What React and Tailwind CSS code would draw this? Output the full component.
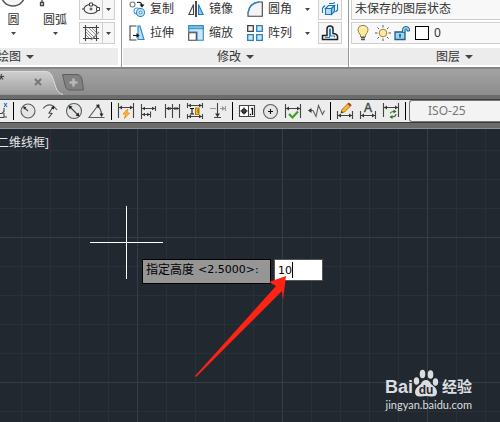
import React from 'react';

const stroke = { fill: 'none', stroke: '#434343', strokeWidth: 1.1 };

function Arrow({ small }) {
  return small ? (
    <svg width="5" height="3" viewBox="0 0 5 3" className="shrink-0">
      <path d="M0 0h5L2.5 3z" fill="#444" />
    </svg>
  ) : (
    <svg width="8" height="4" viewBox="0 0 8 4" className="shrink-0">
      <path d="M0 0h8L4 4z" fill="#444" />
    </svg>
  );
}

// Ribbon icons, 16x16
function CopyIcon() {
  return (
    <svg width="16" height="16" viewBox="0 0 16 16" {...stroke}>
      <circle cx="3.5" cy="3.5" r="2.5" stroke="#777" />
      <circle cx="8" cy="10" r="3" stroke="#4b9fd8" />
      <circle cx="11.5" cy="11.5" r="4" fill="#cfe8f7" stroke="#2b87c8" />
      <circle cx="11.5" cy="11.5" r="1.5" fill="#fff" stroke="#2b87c8" strokeWidth="1" />
      <path d="M8 1.5q4-1 5 2.5" stroke="#111" />
      <path d="M10.5 3.5h5l-2.5 3z" fill="#111" stroke="none" />
    </svg>
  );
}

function MirrorIcon() {
  return (
    <svg width="16" height="16" viewBox="0 0 16 16" {...stroke}>
      <path d="M5.5 3.5v10H.8z" />
      <path d="M10.5 3.5v10h4.7z" fill="#8ccbf0" stroke="#1f7fc4" />
      <path d="M8 0v16" stroke="#111" strokeWidth="1.5" />
    </svg>
  );
}

function StretchIcon() {
  return (
    <svg width="16" height="16" viewBox="0 0 16 16" {...stroke}>
      <path d="M9 1h2l4 13.5H9z" fill="#b5dcf4" stroke="#2b87c8" />
      <path d="M7.5 1H1v14h6.5" />
      <path d="M4 10.5h6" stroke="#111" />
      <path d="M7.5 8l3 2.5-3 2.5z" fill="#111" stroke="none" />
    </svg>
  );
}

function ScaleIcon() {
  return (
    <svg width="16" height="16" viewBox="0 0 16 16" {...stroke}>
      <path d="M.7.7h14.6v14.6H9V7H.7z" fill="#cce6f6" stroke="#2b87c8" />
      <path d="M.7.7h14.6v3H.7z" fill="#7fc1ea" stroke="#2b87c8" strokeWidth="1" />
      <path d="M.7 7.7h7.6v7.6H.7z" fill="#fff" />
    </svg>
  );
}

function FilletIcon() {
  return (
    <svg width="16" height="16" viewBox="0 0 16 16" {...stroke}>
      <path d="M1 15.300V12Q2.500 2 12 1h3.300v14.300z" fill="#f3f3f3" />
      <path d="M1 12Q2.500 2 12 1" stroke="#2b87c8" strokeWidth="1.5" />
    </svg>
  );
}

function ArrayIcon() {
  return (
    <svg width="16" height="16" viewBox="0 0 16 16" {...stroke} strokeWidth="1.3">
      <path d="M.7.7h5.6v5.6H.7z" fill="#f3f3f3" />
      <g fill="#cfe8f7" stroke="#2580c4">
        <path d="M9.7.7h5.6v5.6H9.7z" />
        <path d="M.7 9.7h5.6v5.6H.7z" />
        <path d="M9.7 9.7h5.6v5.6H9.7z" />
      </g>
    </svg>
  );
}

function ExplodeIcon() {
  return (
    <svg width="18" height="16" viewBox="0 0 18 16" {...stroke} stroke="#1a75b8">
      <path d="M4.5 7.5h6v6h-6z" fill="#b9def4" />
      <path d="M4.5 7.5l3-3h6l-3 3z" fill="#e4f3fb" />
      <path d="M10.5 7.5l3-3v6l-3 3z" fill="#8fcbee" />
      <path d="M1.5 7v5M1.5 7L4 4.5M8 2.5h4l2-1M16.5 3v6l-2 2" />
    </svg>
  );
}

function OffsetIcon() {
  return (
    <svg width="18" height="16" viewBox="0 0 18 16" {...stroke}>
      <path d="M1.5 14.5V10.5H6V4q0-3 3-3t3 3v4.5q3.5 0 4.5 2.5v3.5z" stroke="#222" strokeWidth="1.5" />
      <path d="M4 12.5h4.5V4.5q.5-1.5 1 0V11h4v1.5" stroke="#2b87c8" />
    </svg>
  );
}

function EllipseIcon() {
  return (
    <svg width="18" height="16" viewBox="0 0 18 16" {...stroke}>
      <ellipse cx="9" cy="8" rx="7" ry="4.5" />
      <path d="M9 6.5v3M7.5 8h3" />
      <path d="M7.5 2h3v3h-3zM14.5 6.5h3v3h-3z" fill="#fff" strokeWidth="1" />
      <path d="M0 8h2.5" />
    </svg>
  );
}

function HatchIcon() {
  return (
    <svg width="18" height="16" viewBox="0 0 18 16" {...stroke}>
      <path d="M3.5 0v16M14.5 0v16M1 2.5h16M1 13.5h16" />
      <path d="M4 4l9 9M4 7l6 6M4 10l3 3M7 3l7 7M10 3l4 4" stroke="#777" strokeWidth=".8" />
      <path d="M9 15l8-8" stroke="#888" />
    </svg>
  );
}

// Icons of the dimension toolbar, each drawn in a 23x22 cell
const dims = [
  [
    {
      name: '半径',
      art: (
        <>
          <circle cx="11" cy="11" r="7" fill="#e3e6e7" stroke="#5d5d5d" />
          <path d="M11 11L7 7.5" />
          <path d="M6 6.5l3.5.5-2.5 2.5z" fill="#222" stroke="none" />
        </>
      ),
    },
    {
      name: '折弯',
      art: (
        <>
          <path d="M3 8.5Q10 .5 17 10" stroke="#5d5d5d" />
          <path d="M8.5 18l3.5-4.5-3-.5 4-6" />
          <path d="M14 5.5v4l-3-1.5z" fill="#222" stroke="none" />
        </>
      ),
    },
    {
      name: '直径',
      art: (
        <>
          <circle cx="11" cy="11" r="7.5" fill="#e3e6e7" stroke="#5d5d5d" />
          <path d="M7 7l8 8" />
          <path d="M5.5 5.5l4 1-3 3zM16.5 16.5l-4-1 3-3z" fill="#222" stroke="none" />
        </>
      ),
    },
    {
      name: '角度',
      art: (
        <>
          <path d="M18.5 17.5H3L13 4" stroke="#5d5d5d" />
          <path d="M11.5 6q4 3 4 9" />
          <path d="M10 4.5l4 1-2 3zM15.5 17l-2-3.5h4z" fill="#222" stroke="none" />
        </>
      ),
    },
  ],
  [
    {
      name: '快速标注',
      art: (
        <>
          <path d="M3.5 3v15M18.5 3v15M4 7.5h15" />
          <path d="M4 7.5l3-2v4zM18 7.5l-3-2v4z" fill="#333" stroke="none" />
          <path d="M12 9.5l-4 4.5h2.5l-1 4.5 5-5.5h-3l1.5-3.5z" fill="#ffc23d" stroke="#e98300" strokeWidth=".8" />
        </>
      ),
    },
    {
      name: '基线',
      art: (
        <>
          <path d="M3.5 4v15M3.5 8.5h14M3.5 14.5h9M17.5 6v5M12.5 11.5v6" />
          <path d="M4 8.5l3-1.8v3.6zM17 8.5l-3-1.8v3.6zM4 14.5l3-1.8v3.6zM12 14.5l-3-1.8v3.6z" fill="#333" stroke="none" />
        </>
      ),
    },
    {
      name: '连续',
      art: (
        <>
          <path d="M4.5 4v14M11.5 4v14M18.5 4v14M4.5 8.5h14" />
          <path d="M5 8.5l3-1.8v3.6zM11 8.5l-2.5-1.8v3.6zM12 8.5l2.5-1.8v3.6zM18 8.5l-2.5-1.8v3.6z" fill="#333" stroke="none" />
        </>
      ),
    },
    {
      name: '等距标注',
      art: (
        <>
          <path d="M3.5 3v5M18.5 3v5M3.5 14v5M18.5 14v5M3.5 5.5h15M3.5 16.5h15" />
          <path d="M4 5.5l3-1.8v3.6zM18 5.5l-3-1.8v3.6zM4 16.5l3-1.8v3.6zM18 16.5l-3-1.8v3.6z" fill="#333" stroke="none" />
          <path d="M6 8.5h4M6 14h4M8 8.5V14" stroke="#111" />
          <path d="M11.5 8h3.5v6.5h-3.5z" fill="#f7c33d" stroke="#b77900" />
          <path d="M13 10h2M13 12h2" stroke="#8a5800" strokeWidth="1" />
        </>
      ),
    },
    {
      name: '折断标注',
      art: (
        <>
          <path d="M3 8.5h6M13 8.5h5M18.5 6v5" stroke="#999" />
          <path d="M15 6l3 2.5-3 2.5z" fill="#999" stroke="none" />
          <path d="M10.5 3v15M7 17.5h7" />
          <path d="M8 13.5h5l-2.5 3.5z" fill="#333" stroke="none" />
        </>
      ),
    },
  ],
  [
    {
      name: '公差',
      art: (
        <>
          <path d="M3.5 5.5h15v11h-15zM12.5 5.5v11" fill="#fff" />
          <circle cx="8" cy="11" r="2" stroke="#111" />
          <path d="M4.5 11h7M8 7.5v7" stroke="#111" />
          <path d="M13.8 14.5h1.2M16.5 8v7M16.5 8l-1.2 1" stroke="#111" strokeWidth="1.3" />
        </>
      ),
    },
    {
      name: '圆心标记',
      art: (
        <>
          <circle cx="11.5" cy="11.5" r="7" fill="#e3e6e7" stroke="#5d5d5d" />
          <path d="M9 11.5h5M11.5 9v5" stroke="#111" />
        </>
      ),
    },
    {
      name: '检验',
      art: (
        <>
          <path d="M3.5 4v14M18.5 4v14M3.5 8.5h15" />
          <path d="M4 8.5l3-2v4zM18 8.5l-3-2v4z" fill="#333" stroke="none" />
          <path d="M7 14l3.5 3.5L16 11.5" stroke="#38a31b" strokeWidth="2.2" />
        </>
      ),
    },
    {
      name: '折弯线性',
      art: (
        <>
          <path d="M4 10.5h4l3 6 2.5-11 4 9 2-4" stroke="#5d5d5d" />
          <path d="M3 10.5l3.5-2.5v5z" fill="#333" stroke="none" />
        </>
      ),
    },
  ],
  [
    {
      name: '编辑标注',
      art: (
        <>
          <path d="M3.5 11v8M18.5 11v8M3.5 15.5h15" />
          <path d="M4 15.5l3-2v4zM18 15.5l-3-2v4z" fill="#333" stroke="none" />
          <path d="M7 13l1-3.5L14.5 3l2.5 2.5L10.5 12z" fill="#f9b82c" stroke="#a96a16" strokeWidth=".9" />
          <path d="M13.5 4L15 2.5l2.5 2.5L16 6.5z" fill="#b33a2d" stroke="none" />
          <path d="M7 13l.7-2 1.3 1.2z" fill="#222" stroke="none" />
        </>
      ),
    },
    {
      name: '编辑标注文字',
      art: (
        <>
          <path d="M3.5 11v8M18.5 11v8M3.5 15.5h15" />
          <path d="M4 15.5l3-2v4zM18 15.5l-3-2v4z" fill="#333" stroke="none" />
          <text x="11" y="12" textAnchor="middle" fontSize="12" fontFamily="Liberation Sans, sans-serif" fill="#444" stroke="#444" strokeWidth=".4">
            A
          </text>
        </>
      ),
    },
    {
      name: '标注更新',
      art: (
        <>
          <path d="M3.5 3v14M18.5 3v14M3.5 7.5h15" />
          <path d="M4 7.5l3-2v4zM18 7.5l-3-2v4z" fill="#333" stroke="none" />
          <path d="M10.5 13.5q0-2 4-2M16 14q0 3-4.5 3" stroke="#2c6b22" />
          <path d="M13.5 9.5l3 2-3 2zM12.5 15l-3 2 3 2z" fill="#2c6b22" stroke="none" />
        </>
      ),
    },
  ],
];

function Tool({ icon, label, arrow }) {
  return (
    <button className="flex items-center gap-[5px] whitespace-nowrap">
      {icon}
      <span>{label}</span>
      {arrow && (
        <span className="ml-2">
          <Arrow small />
        </span>
      )}
    </button>
  );
}

function BoxButton({ label, children }) {
  return (
    <button aria-label={label} className="flex h-[22px] w-6 items-center justify-center border border-[#cfcfcf] bg-[#f7f7f7]">
      {children}
    </button>
  );
}

function SplitButton({ label, children }) {
  return (
    <button aria-label={label} className="flex h-[22px] w-9 items-center border border-[#cfcfcf] bg-[#f7f7f7]">
      <span className="flex h-full w-[23px] items-center justify-center border-r border-[#cfcfcf]">{children}</span>
      <span className="flex flex-1 justify-center">
        <Arrow small />
      </span>
    </button>
  );
}

function PanelTitle({ label, className }) {
  return (
    <button className={`mt-1 flex h-[17px] w-full items-center gap-[5px] bg-[#ececec] ${className}`}>
      <span>{label}</span>
      <Arrow />
    </button>
  );
}

function Ribbon() {
  return (
    <header className="flex h-[67px] overflow-hidden bg-white text-[12px] leading-4 text-[#333]">
      <section className="w-[122px] shrink-0 border-r border-[#999]">
        <div className="-mt-[2px] flex h-[46px]">
          <button className="flex w-[27px] flex-col items-center">
            <svg width="27" height="9" viewBox="0 0 27 9">
              <circle cx="13" cy="-4" r="12" fill="#f6f6f6" stroke="#555" strokeWidth="1.5" />
            </svg>
            <span className="mt-[5px]">圆</span>
            <span className="mt-1">
              <Arrow small />
            </span>
          </button>
          <button className="ml-1 flex w-12 flex-col items-center">
            <svg width="48" height="9" viewBox="0 0 48 9">
              <path d="M11 0v4M9.5 4.5h3v3h-3z" fill="#fff" stroke="#444" strokeWidth="1.3" />
            </svg>
            <span className="mt-[5px]">圆弧</span>
            <span className="mt-1">
              <Arrow small />
            </span>
          </button>
          <div className="flex flex-col gap-[2px]">
            <SplitButton label="椭圆">
              <EllipseIcon />
            </SplitButton>
            <SplitButton label="图案填充">
              <HatchIcon />
            </SplitButton>
          </div>
        </div>
        <PanelTitle label="绘图" className="-ml-[3px]" />
      </section>

      <section className="ml-px w-[226px] shrink-0 border-r border-[#999]">
        <div className="-mt-[2px] grid h-[46px] grid-cols-[59px_59px_71px_24px] grid-rows-[22px_22px] gap-y-[2px] pl-[6px]">
          <Tool icon={<CopyIcon />} label="复制" />
          <Tool icon={<MirrorIcon />} label="镜像" />
          <Tool icon={<FilletIcon />} label="圆角" arrow />
          <BoxButton label="分解">
            <ExplodeIcon />
          </BoxButton>
          <Tool icon={<StretchIcon />} label="拉伸" />
          <Tool icon={<ScaleIcon />} label="缩放" />
          <Tool icon={<ArrayIcon />} label="阵列" arrow />
          <BoxButton label="偏移">
            <OffsetIcon />
          </BoxButton>
        </div>
        <PanelTitle label="修改" className="justify-center" />
      </section>

      <section className="ml-px min-w-0 flex-1">
        <div className="-mt-[2px] flex h-[46px] flex-col gap-[2px] pl-px">
          <select aria-label="图层状态" className="h-[22px] appearance-none border border-r-0 border-[#cfcfcf] bg-[#f8f8f8] pl-[3px] text-[12px]">
            <option>未保存的图层状态</option>
          </select>
          <button className="flex h-[22px] items-center border border-r-0 border-[#cfcfcf] bg-[#f8f8f8] pl-[5px]">
            <svg width="12" height="18" viewBox="0 0 12 18" className="mr-[6px]">
              <path d="M3.5 11Q1 8 1 6q0-4.5 5-4.5T11 6q0 2-2.5 5v2h-5z" fill="#ffe99a" stroke="#8f8458" />
              <path d="M4 13.5h4M4 15.5h4" stroke="#555" strokeWidth="1.5" />
              <path d="M4 4.5q1-1.5 3-1" fill="none" stroke="#fff" />
            </svg>
            <svg width="16" height="16" viewBox="0 0 16 16" className="mr-[3px]">
              <circle cx="8" cy="8" r="3.8" fill="#ffe9a0" stroke="#9b8540" />
              <path d="M8 0v2.5M8 13.5V16M0 8h2.5M13.5 8H16M2.5 2.5l1.5 1.5M12 12l1.5 1.5M13.5 2.5L12 4M4 12l-1.5 1.5" stroke="#555" />
            </svg>
            <svg width="17" height="16" viewBox="0 0 17 16" className="mr-1">
              <path d="M1 7h10v7.5H1z" fill="#9bd4f3" stroke="#1c5f87" strokeWidth="1.3" />
              <path d="M8.5 7V4.5Q8.5 1.5 12 1.5t3.5 3V6H13V5q0-1-1-1t-1 1v2" fill="#9bd4f3" stroke="#1c5f87" />
              <path d="M6 9v3.5" stroke="#174e70" strokeWidth="1.5" />
            </svg>
            <span className="mr-[5px] size-[14px] border border-black bg-white" />
            <span className="font-['Noto_Sans']">0</span>
          </button>
        </div>
        <PanelTitle label="图层" className="pl-[86px]" />
      </section>
    </header>
  );
}

function FileTabs() {
  return (
    <nav className="flex h-7 items-end border-t-2 border-[#858585] bg-linear-to-b from-[#a3a3a3] to-[#8c8c8c]">
      <div className="relative h-[24px] w-[62px]">
        <svg width="64" height="24" viewBox="0 0 64 24" className="absolute inset-0">
          <defs>
            <linearGradient id="tab" x1="0" y1="0" x2="0" y2="1">
              <stop offset="0" stopColor="#cfcfcf" />
              <stop offset="1" stopColor="#a0a0a0" />
            </linearGradient>
          </defs>
          <path d="M-1 .5H46q5 0 7 7l3 9q2 6 7 7H-1z" fill="url(#tab)" />
          <path d="M-1 .5H46q5 0 7 7l3 9q2 6 7 7" fill="none" stroke="#dcdcdc" />
        </svg>
        <span className="absolute top-0 -left-[2px] text-[12px] text-[#222]">*</span>
        <button aria-label="关闭" className="absolute top-[7px] left-[34px]">
          <svg width="8" height="8" viewBox="0 0 8 8">
            <path d="M1 1l6 6M7 1L1 7" stroke="#777" strokeWidth="2" />
          </svg>
        </button>
      </div>
      <button aria-label="新建图形" className="mb-1">
        <svg width="23" height="17" viewBox="0 0 23 17">
          <path d="M.5.5H15q4 0 5 5l1.5 10.5H8Q4 16 3 11z" fill="#808080" stroke="#5f5f5f" />
          <path d="M11.5 4.5v8M7.5 8.5h8" stroke="#b8b8b8" strokeWidth="2.5" />
        </svg>
      </button>
    </nav>
  );
}

function DimensionBar() {
  return (
    <div className="border-t-4 border-b-[5px] border-[#6b6b6b]">
      <div role="toolbar" className="flex h-6 items-center overflow-hidden border-y border-[#3b3b3b] bg-[#ededed]">
        <button aria-label="坐标" className="h-[22px] w-[11px] shrink-0">
          <svg width="11" height="22" viewBox="0 0 11 22" {...stroke}>
            <path d="M0 13.5h2l2-2V8M4 13v4h3M0 17.5h4" />
            <path d="M4 3l3 4M7 3L4 7" stroke="#1677c8" />
          </svg>
        </button>
        {dims.map((group, i) => (
          <React.Fragment key={i}>
            <span className="mr-[3px] ml-[2px] h-[18px] w-px shrink-0 bg-black" />
            {group.map((tool) => (
              <button key={tool.name} aria-label={tool.name} className="shrink-0">
                <svg width="23" height="22" viewBox="0 0 23 22" {...stroke}>
                  {tool.art}
                </svg>
              </button>
            ))}
          </React.Fragment>
        ))}
        <span className="mr-[3px] ml-[2px] h-[18px] w-px shrink-0 bg-black" />
        <select
          aria-label="标注样式"
          className="h-[22px] min-w-0 flex-1 appearance-none rounded-l-[3px] border border-r-0 border-[#777] bg-[#f3f3f3] pl-[18px] font-['Noto_Sans'] text-[12px] text-[#777]"
        >
          <option>ISO-25</option>
        </select>
      </div>
    </div>
  );
}

function Watermark() {
  return (
    <div className="absolute right-[28px] bottom-[9px] text-[#dcdddf]">
      <div className="flex h-[28px] items-end justify-end">
        <span className="font-['Liberation_Sans'] text-[18px] leading-5 font-bold">Bai</span>
        <svg width="26" height="28" viewBox="0 0 26 28" fill="currentColor">
          <ellipse cx="3.5" cy="12" rx="2.7" ry="3.7" />
          <ellipse cx="9.5" cy="5" rx="2.8" ry="4.3" />
          <ellipse cx="17.5" cy="5.5" rx="2.8" ry="4.3" />
          <ellipse cx="22.5" cy="13" rx="2.7" ry="3.7" />
          <path d="M13 11q3.5 0 5 4 6 4 6 8 0 5-6 4.5-5-.8-10 0-6 .5-6-4.5 0-4 6-8 1.5-4 5-4z" />
          <text x="13" y="25" textAnchor="middle" fontSize="12" fontWeight="bold" fontFamily="Liberation Sans, sans-serif" fill="#222830">
            du
          </text>
        </svg>
        <span className="ml-[3px] text-[15px] leading-[22px] font-bold">经验</span>
      </div>
      <a href="#jingyan" className="block text-right font-['Lato'] text-[11px] leading-4">
        jingyan.baidu.com
      </a>
    </div>
  );
}

function Canvas() {
  return (
    <main className="relative h-[294px] overflow-hidden border-t border-[#8d9194] bg-[#222830] bg-[linear-gradient(#353d4d_1px,transparent_1px),linear-gradient(90deg,#353d4d_1px,transparent_1px),linear-gradient(#29303a_1px,transparent_1px),linear-gradient(90deg,#29303a_1px,transparent_1px)] bg-size-[145px_145px,145px_145px,29px_29px,29px_29px] bg-position-[137px_108px,137px_108px,21px_21px,21px_21px] text-[12px]">
      <p className="mt-[6px] -ml-[3px] leading-4 text-[#e4e6e8]">二维线框]</p>

      {/* cursor */}
      <span className="absolute top-[113px] left-[90px] h-px w-[73px] bg-white" />
      <span className="absolute top-[77px] left-[126px] h-[73px] w-px bg-white" />

      {/* dynamic input */}
      <div className="absolute top-[130px] left-[142px] flex items-start gap-[3px] font-['DejaVu_Sans','Noto_Sans_CJK_SC',sans-serif] text-[11px] text-black">
        <label htmlFor="height" className="flex h-[25px] w-[129px] gap-1 border border-black bg-[#969696] pl-[3px] leading-[20px] whitespace-nowrap">
          <span className="text-[12px]">指定高度</span>
          <span>{'<2.5000>:'}</span>
        </label>
        <div className="relative">
          <input id="height" defaultValue="10" className="block h-[22px] w-[49px] border border-[#555] bg-white pl-[3px] text-[11px]" />
          <span className="absolute top-[3px] left-[18px] h-4 w-px bg-black" />
        </div>
      </div>

      <svg width="100" height="104" viewBox="0 0 100 104" className="absolute top-[146px] left-[194px]">
        <path d="M92 1L75 7l7 4L1 101l1 1 86-86 1 9z" fill="#ff2314" />
      </svg>

      <Watermark />
    </main>
  );
}

export default function App() {
  return (
    <div className="overflow-hidden bg-[#6b6b6b] font-['Open_Sans','Noto_Sans_CJK_SC',sans-serif]">
      <Ribbon />
      <FileTabs />
      <DimensionBar />
      <Canvas />
    </div>
  );
}
